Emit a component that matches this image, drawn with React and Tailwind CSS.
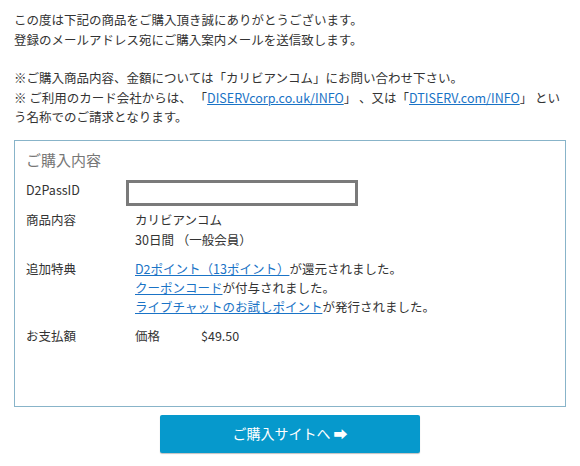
export default function App() {
  const font = { fontFamily: '"Meiryo UI","Noto Sans CJK JP","Noto Sans",sans-serif' };
  return (
    <div className="w-[580px] h-[466px] bg-white text-[#333] overflow-hidden" style={font}>
      <div className="px-[14px] pt-[10px] text-[12.5px] leading-[19.5px] whitespace-nowrap">
        <p>この度は下記の商品をご購入頂き誠にありがとうございます。</p>
        <p>登録のメールアドレス宛にご購入案内メールを送信致します。</p>
        <p className="mt-[19px]">※ご購入商品内容、金額については「カリビアンコム」にお問い合わせ下さい。</p>
        <p>
          ※ ご利用のカード会社からは、 「<a className="text-[#1a73c6] underline">DISERVcorp.co.uk/INFO</a>」 、又は「<a className="text-[#1a73c6] underline">DTISERV.com/INFO</a>」 とい
        </p>
        <p>う名称でのご請求となります。</p>
      </div>
      <div className="mx-[14px] mt-[13px] h-[267px] border border-[#88b4c9] pl-[11px] text-[12.5px]">
        <div className="pt-[9px] text-[15px] leading-[20px] text-[#777]">ご購入内容</div>
        <div className="mt-[10px] flex">
          <div className="w-[100px] leading-[20px]">D2PassID</div>
          <div className="w-[232px] h-[26px] border-[3px] border-[#7a7a7a] bg-white"></div>
        </div>
        <div className="mt-[4px] flex leading-[20px]">
          <div className="w-[109px]">商品内容</div>
          <div>
            <div>カリビアンコム</div>
            <div>30日間 （一般会員）</div>
          </div>
        </div>
        <div className="mt-[9px] flex leading-[19px]">
          <div className="w-[109px]">追加特典</div>
          <div>
            <div><a className="text-[#1a73c6] underline">D2ポイント（13ポイント）</a>が還元されました。</div>
            <div><a className="text-[#1a73c6] underline">クーポンコード</a>が付与されました。</div>
            <div><a className="text-[#1a73c6] underline">ライブチャットのお試しポイント</a>が発行されました。</div>
          </div>
        </div>
        <div className="mt-[10px] flex leading-[20px]">
          <div className="w-[109px]">お支払額</div>
          <div className="w-[66px]">価格</div>
          <div>$49.50</div>
        </div>
      </div>
      <div className="mt-[8px] flex justify-center">
        <button className="w-[260px] h-[38px] bg-[#0699cc] text-white text-[14px] rounded-[2px] shadow-[0_1px_1px_rgba(0,0,0,0.25)]">
          ご購入サイトへ ➡
        </button>
      </div>
    </div>
  );
}
